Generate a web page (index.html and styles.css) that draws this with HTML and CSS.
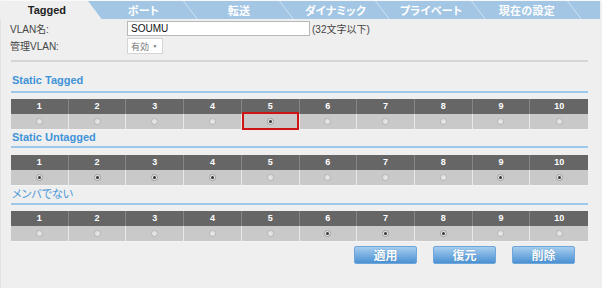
FILE: index.html
```html
<!DOCTYPE html>
<html lang="ja">
<head>
<meta charset="utf-8">
<link rel="stylesheet" href="styles.css">
</head>
<body>
<div class="page">
  <div class="tabs">
    <div class="tab active"><span>Tagged</span></div>
    <div class="tab"><span>ポート</span></div>
    <div class="tab"><span>転送</span></div>
    <div class="tab"><span>ダイナミック</span></div>
    <div class="tab"><span>プライベート</span></div>
    <div class="tab"><span>現在の設定</span></div>
  </div>

  <div class="form">
    <div class="frow">
      <label class="flabel">VLAN名:</label>
      <div class="fval"><span class="input">SOUMU</span><span class="hint">(32文字以下)</span></div>
    </div>
    <div class="frow">
      <label class="flabel">管理VLAN:</label>
      <div class="fval"><span class="select">有効 <span class="arr">▼</span></span></div>
    </div>
  </div>
  <div class="sep"></div>

  <div class="content">
    <div class="title t1">Static Tagged</div>
    <div class="ports">
      <div class="hd">1</div><div class="hd">2</div><div class="hd">3</div><div class="hd">4</div><div class="hd">5</div><div class="hd">6</div><div class="hd">7</div><div class="hd">8</div><div class="hd">9</div><div class="hd">10</div>
      <div class="bd"><i class="rd"></i></div><div class="bd"><i class="rd"></i></div><div class="bd"><i class="rd"></i></div><div class="bd"><i class="rd"></i></div><div class="bd hl"><i class="rd on"></i></div><div class="bd"><i class="rd"></i></div><div class="bd"><i class="rd"></i></div><div class="bd"><i class="rd"></i></div><div class="bd"><i class="rd"></i></div><div class="bd"><i class="rd"></i></div>
    </div>

    <div class="title t2">Static Untagged</div>
    <div class="ports">
      <div class="hd">1</div><div class="hd">2</div><div class="hd">3</div><div class="hd">4</div><div class="hd">5</div><div class="hd">6</div><div class="hd">7</div><div class="hd">8</div><div class="hd">9</div><div class="hd">10</div>
      <div class="bd"><i class="rd on"></i></div><div class="bd"><i class="rd on"></i></div><div class="bd"><i class="rd on"></i></div><div class="bd"><i class="rd on"></i></div><div class="bd"><i class="rd"></i></div><div class="bd"><i class="rd"></i></div><div class="bd"><i class="rd"></i></div><div class="bd"><i class="rd"></i></div><div class="bd"><i class="rd on"></i></div><div class="bd"><i class="rd on"></i></div>
    </div>

    <div class="title t3">メンバでない</div>
    <div class="ports">
      <div class="hd">1</div><div class="hd">2</div><div class="hd">3</div><div class="hd">4</div><div class="hd">5</div><div class="hd">6</div><div class="hd">7</div><div class="hd">8</div><div class="hd">9</div><div class="hd">10</div>
      <div class="bd"><i class="rd"></i></div><div class="bd"><i class="rd"></i></div><div class="bd"><i class="rd"></i></div><div class="bd"><i class="rd"></i></div><div class="bd"><i class="rd"></i></div><div class="bd"><i class="rd on"></i></div><div class="bd"><i class="rd on"></i></div><div class="bd"><i class="rd on"></i></div><div class="bd"><i class="rd"></i></div><div class="bd"><i class="rd"></i></div>
    </div>

    <div class="buttons">
      <button class="btn">適用</button>
      <button class="btn">復元</button>
      <button class="btn">削除</button>
    </div>
  </div>
</div>
</body>
</html>
```

FILE: styles.css
```css
html, body {
  margin: 0;
  padding: 0;
  background: #efefef;
}
body {
  width: 602px;
  height: 288px;
  overflow: hidden;
  font-family: "Liberation Sans", "Noto Sans CJK JP", sans-serif;
  color: #333;
}
.page {
  height: 288px;
  border-left: 1px solid #e2e2e2;
  border-top: 1px solid #f8f8f8;
  box-sizing: border-box;
}

/* tabs */
.tabs {
  display: flex;
  height: 18px;
  background: #a2c6e4;
  overflow: hidden;
  margin-left: -1px;
  margin-right: 2px;
}
.tab {
  flex: 0 0 96px;
  box-sizing: border-box;
  height: 18px;
  transform: skewX(37deg);
  transform-origin: top left;
  border-right: 1px solid #cfe2f2;
  display: flex;
  align-items: center;
  justify-content: center;
}
.tab span {
  transform: skewX(-37deg);
  color: #fff;
  font-family: "Noto Sans CJK JP", sans-serif;
  font-feature-settings: "palt";
  font-size: 11px;
  font-weight: bold;
  letter-spacing: 0.3px;
  padding-left: 2px;
}
.tab.active {
  flex-basis: 102px;
  margin-left: -14px;
  background: #efefef;
  border-right: none;
  padding-left: 18px;
}
.tab.active span {
  color: #222;
  font-family: "Liberation Sans", sans-serif;
  font-size: 11px;
  letter-spacing: 0;
  padding-left: 0;
  padding-right: 12px;
}

/* form */
.form {
  padding: 2px 0 0 9px;
  display: flex;
  flex-direction: column;
  gap: 2px;
}
.frow {
  display: flex;
  align-items: center;
  height: 15px;
}
.flabel {
  width: 117px;
  font-size: 10px;
  color: #444;
  font-family: "Liberation Sans", "Noto Sans CJK JP", sans-serif;
}
.fval {
  display: flex;
  align-items: center;
}
.input {
  display: block;
  width: 183px;
  height: 15px;
  box-sizing: border-box;
  background: #fff;
  border: 1px solid #b8b8b8;
  font-size: 10px;
  line-height: 13px;
  padding-left: 3px;
  color: #111;
}
.hint {
  font-size: 10px;
  color: #444;
  margin-left: 2px;
}
.select {
  display: block;
  width: 36px;
  height: 16px;
  box-sizing: border-box;
  background: #fff;
  border: 1px solid #d4d4d4;
  font-size: 9px;
  line-height: 14px;
  padding-left: 3px;
  color: #777;
}
.arr {
  font-size: 5px;
  vertical-align: 2px;
  margin-left: 1px;
}

.sep {
  margin: 7px 14px 0 10px;
  height: 2px;
  background: #d6d6d6;
}

/* sections */
.content {
  margin: 0 14px 0 10px;
}
.title {
  font-size: 11px;
  font-weight: bold;
  color: #3f93d8;
  line-height: 14px;
  border-bottom: 2px solid #9cc8ec;
  padding-left: 1px;
}
.t1 {
  padding-top: 11px;
  padding-bottom: 4px;
  margin-bottom: 6px;
}
.t2 {
  padding-bottom: 2px;
  margin-bottom: 7px;
}
.t3 {
  font-weight: normal;
  font-family: "Noto Sans CJK JP", sans-serif;
  font-feature-settings: "palt";
  padding-bottom: 3px;
  margin-bottom: 6px;
  color: #4a98da;
}

.ports {
  display: grid;
  grid-template-columns: repeat(10, 1fr);
}
.hd {
  height: 15px;
  background: #666;
  border-right: 1px solid #858585;
  color: #fff;
  font-size: 9px;
  font-weight: bold;
  text-align: center;
  line-height: 15px;
}
.hd:nth-child(10) { border-right: none; }
.bd {
  height: 16px;
  box-sizing: border-box;
  background: #c9c9c9;
  border-right: 1px solid #e9e9e9;
  border-bottom: 1px solid #f4f4f4;
  display: flex;
  align-items: center;
  justify-content: center;
  position: relative;
}
.bd:last-child { border-right: none; }
.rd {
  display: block;
  width: 7px;
  height: 7px;
  border-radius: 50%;
  background: #e4e4e4;
  border: 1px solid #b4b4b4;
  box-sizing: border-box;
  position: relative;
}
.rd.on {
  background: #ececec;
  border-color: #9a9a9a;
}
.rd.on::after {
  content: "";
  position: absolute;
  left: 1px;
  top: 1px;
  width: 3px;
  height: 3px;
  border-radius: 50%;
  background: #333;
}
.hl::before {
  content: "";
  position: absolute;
  left: 0;
  right: 0;
  top: -2px;
  bottom: -1px;
  border: 2px solid #cf1414;
}

.buttons {
  display: flex;
  justify-content: flex-end;
  gap: 16px;
  padding-right: 13px;
  margin-top: 4px;
}
.btn {
  width: 63px;
  height: 18px;
  padding: 0;
  border: 1px solid #6ea6da;
  border-radius: 2px;
  background: linear-gradient(#a6cdee, #4a91d3);
  color: #fff;
  font-family: "Noto Sans CJK JP", sans-serif;
  font-size: 12px;
  font-weight: bold;
  text-shadow: 0 0 1px #3a78b0;
  line-height: 16px;
}
```
